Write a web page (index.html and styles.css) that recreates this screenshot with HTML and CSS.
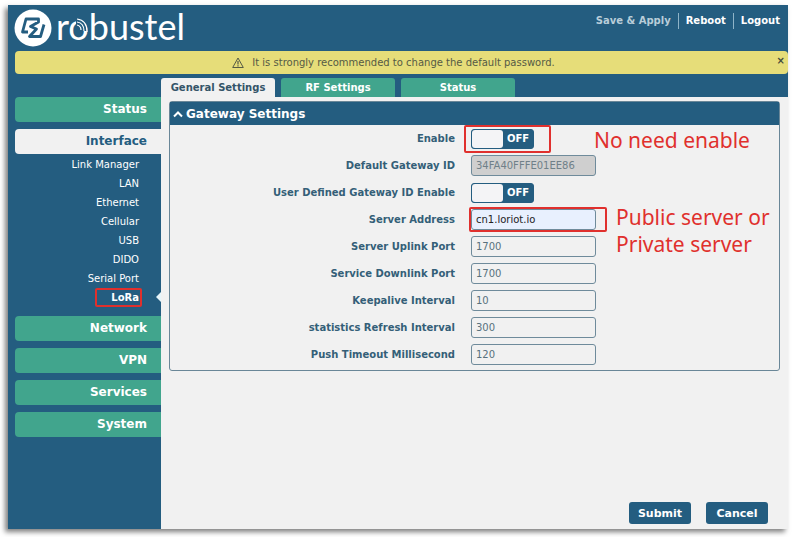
FILE: index.html
```html
<!DOCTYPE html>
<html lang="en">
<head>
<meta charset="utf-8">
<title>robustel - LoRa</title>
<link rel="stylesheet" href="styles.css">
</head>
<body>
<div class="app">
  <header class="header">
    <a class="logo" href="#">
      <svg class="logo-mark" viewBox="0 0 38 38" aria-hidden="true">
        <circle cx="19" cy="19" r="18.5" fill="#fff"/>
        <g fill="none" stroke="#245d80" stroke-width="2.8" stroke-linejoin="round">
          <path d="M14 23H8.500L12 10H24.500V13L16.500 17.500 22.500 20 15.500 27.500H26.500L30 15.500"/>
        </g>
      </svg>
      <span class="logo-text">robustel</span>
      <svg class="logo-waves" viewBox="0 0 12 16" aria-hidden="true">
        <path d="M0 2H6Q11 5 11 13H4L0 9Z" fill="#245d80"/>
        <g fill="none" stroke="#fff" stroke-width="1.200">
          <path d="M1 1Q11 2 11 14"/>
          <path d="M1 4Q8 5 8 13"/>
          <path d="M1 7Q5 8 5 12"/>
        </g>
      </svg>
    </a>
    <nav class="actions" aria-label="Session">
      <a class="dim" href="#">Save &amp; Apply</a>
      <a href="#">Reboot</a>
      <a href="#">Logout</a>
    </nav>
  </header>

  <div class="notice" role="alert">
    <svg class="warn" viewBox="0 0 12 12" aria-hidden="true">
      <path d="M6 1 11.300 10.500H.7Z" fill="none" stroke="#555a45" stroke-linejoin="round"/>
      <path d="M6 4V7.500M6 8.300V9.500" stroke="#555a45" stroke-width="1.200"/>
    </svg>
    <span>It is strongly recommended to change the default password.</span>
    <button class="close" type="button" aria-label="Close">×</button>
  </div>

  <div class="body">
    <nav class="sidebar" aria-label="Main">
      <a class="group" href="#">Status</a>
      <a class="group open" href="#">Interface</a>
      <div class="items">
        <a href="#">Link Manager</a>
        <a href="#">LAN</a>
        <a href="#">Ethernet</a>
        <a href="#">Cellular</a>
        <a href="#">USB</a>
        <a href="#">DIDO</a>
        <a href="#">Serial Port</a>
        <a class="current" href="#">LoRa<span class="mark mark-item"></span></a>
      </div>
      <a class="group" href="#">Network</a>
      <a class="group" href="#">VPN</a>
      <a class="group" href="#">Services</a>
      <a class="group" href="#">System</a>
    </nav>

    <main class="main">
      <nav class="tabs" aria-label="Sections">
        <a class="tab active" href="#">General Settings</a>
        <a class="tab" href="#">RF Settings</a>
        <a class="tab" href="#">Status</a>
      </nav>
      <form class="content">
        <section class="panel">
          <h2 class="panel-title">
            <svg class="chevron" viewBox="0 0 10 8" aria-hidden="true"><path d="M1 6.500 5 2.500 9 6.500" fill="none" stroke="#fff" stroke-width="2"/></svg>
            Gateway Settings
          </h2>
          <div class="rows">
            <div class="row">
              <label for="enable">Enable</label>
              <div class="field">
                <button class="switch" id="enable" type="button" role="switch" aria-checked="false"><span class="knob"></span><span class="state">OFF</span></button>
                <span class="mark mark-switch"></span>
                <span class="note note-enable">No need enable</span>
              </div>
            </div>
            <div class="row">
              <label for="gwid">Default Gateway ID</label>
              <div class="field"><input id="gwid" type="text" value="34FA40FFFE01EE86" disabled></div>
            </div>
            <div class="row">
              <label for="userid">User Defined Gateway ID Enable</label>
              <div class="field"><button class="switch" id="userid" type="button" role="switch" aria-checked="false"><span class="knob"></span><span class="state">OFF</span></button></div>
            </div>
            <div class="row">
              <label for="server">Server Address</label>
              <div class="field">
                <input class="filled" id="server" type="text" value="cn1.loriot.io">
                <span class="mark mark-input"></span>
                <span class="note note-server">Public server or<br>Private server</span>
              </div>
            </div>
            <div class="row">
              <label for="up">Server Uplink Port</label>
              <div class="field"><input id="up" type="text" value="1700"></div>
            </div>
            <div class="row">
              <label for="down">Service Downlink Port</label>
              <div class="field"><input id="down" type="text" value="1700"></div>
            </div>
            <div class="row">
              <label for="keep">Keepalive Interval</label>
              <div class="field"><input id="keep" type="text" value="10"></div>
            </div>
            <div class="row">
              <label for="stat">statistics Refresh Interval</label>
              <div class="field"><input id="stat" type="text" value="300"></div>
            </div>
            <div class="row">
              <label for="push">Push Timeout Millisecond</label>
              <div class="field"><input id="push" type="text" value="120"></div>
            </div>
          </div>
        </section>
        <div class="buttons">
          <button class="btn" type="submit">Submit</button>
          <button class="btn" type="button">Cancel</button>
        </div>
      </form>
    </main>
  </div>
</div>
</body>
</html>
```
FILE: styles.css
```css
:root {
  --blue: #245d80;
  --green: #41a58d;
  --grey: #f1f1f1;
  --red: #e0302d;
}

* {
  box-sizing: border-box;
}

body {
  margin: 0;
  padding: 5px 8px 8px;
  background: #fff;
  font-family: Verdana, "DejaVu Sans", sans-serif;
  font-size: 10px;
}

a {
  color: #fff;
  text-decoration: none;
}

button,
input {
  font: inherit;
}

.app {
  display: flex;
  flex-direction: column;
  min-height: calc(100vh - 13px);
  background: var(--blue);
  box-shadow: -3px 3px 5px rgba(0, 0, 0, 0.5);
}

.header {
  display: flex;
  justify-content: space-between;
  height: 46px;
  padding: 0 8px 0 6px;
}

.logo {
  position: relative;
  display: flex;
  align-items: center;
  gap: 4px;
}

.logo-mark {
  width: 38px;
  height: 38px;
}

.logo-text {
  padding-bottom: 4px;
  font-family: Lato, sans-serif;
  font-size: 36px;
  line-height: 38px;
}

.logo-waves {
  position: absolute;
  left: 62px;
  top: 13px;
  width: 12px;
  height: 16px;
}

.actions {
  display: flex;
  align-items: center;
  height: 16px;
  margin-top: 8px;
  font-weight: bold;
}

.actions a {
  line-height: 16px;
}

.actions a + a {
  margin-left: 7px;
  padding-left: 7px;
  border-left: 1px solid #8fb4c8;
}

.actions .dim {
  color: #b9cdd9;
}

.notice {
  position: relative;
  display: flex;
  align-items: center;
  justify-content: center;
  gap: 8px;
  height: 23px;
  margin-left: 7px;
  padding-right: 16px;
  border-radius: 4px;
  background: #e6dd79;
  color: #555a45;
}

.warn {
  width: 12px;
  height: 12px;
}

.close {
  position: absolute;
  right: 3px;
  top: 4px;
  padding: 0;
  border: 0;
  background: none;
  color: #444a3a;
  font-weight: bold;
  line-height: 12px;
}

.body {
  display: flex;
  flex: 1;
}

.sidebar {
  display: flex;
  flex-direction: column;
  flex: 0 0 153px;
  padding: 23px 0 0 7px;
}

.group {
  height: 25px;
  margin-bottom: 7px;
  padding-right: 14px;
  border-radius: 4px 0 0 4px;
  background: var(--green);
  font-size: 12px;
  font-weight: bold;
  line-height: 25px;
  text-align: right;
}

.group.open {
  margin-bottom: 0;
  background: var(--grey);
  color: var(--blue);
}

.items {
  padding: 1px 0 9px;
}

.items a {
  position: relative;
  display: block;
  padding-right: 22px;
  line-height: 19px;
  text-align: right;
}

.items .current {
  font-weight: bold;
}

.current::after {
  content: "";
  position: absolute;
  right: 0;
  top: 4px;
  border: 5px solid transparent;
  border-left-width: 0;
  border-right-color: #e6f5fa;
}

.mark {
  position: absolute;
  border: 2px solid var(--red);
  border-radius: 2px;
}

.mark-item {
  right: 19px;
  top: 0;
  width: 47px;
  height: 19px;
}

.main {
  display: flex;
  flex-direction: column;
  flex: 1;
}

.tabs {
  display: flex;
  gap: 6px;
  padding-top: 4px;
}

.tab {
  width: 114px;
  height: 19px;
  border-radius: 3px 3px 0 0;
  background: var(--green);
  font-weight: bold;
  line-height: 19px;
  text-align: center;
}

.tab.active {
  background: var(--grey);
  color: #345468;
}

.content {
  display: flex;
  flex-direction: column;
  justify-content: space-between;
  flex: 1;
  padding: 4px 8px 5px;
  background: var(--grey);
}

.panel {
  border: 1px solid #6a8798;
  border-radius: 3px;
}

.panel-title {
  display: flex;
  align-items: center;
  gap: 3px;
  height: 23px;
  margin: 0;
  padding-left: 3px;
  background: var(--blue);
  color: #fff;
  font-size: 12px;
}

.chevron {
  width: 10px;
  height: 8px;
}

.rows {
  padding-bottom: 2px;
}

.row {
  display: grid;
  grid-template-columns: 285px 1fr;
  column-gap: 16px;
  align-items: center;
  height: 27px;
}

.row label {
  color: #345f78;
  font-weight: bold;
  text-align: right;
}

.field {
  position: relative;
  display: flex;
}

.field input {
  width: 125px;
  height: 21px;
  padding: 0 4px;
  border: 1px solid #6f8b9b;
  border-radius: 3px;
  background: var(--grey);
  color: #58717e;
}

.field input:disabled {
  background: #cfcfcf;
  color: #6f8089;
}

.field .filled {
  background: #e8f0fe;
  color: #222;
}

.switch {
  display: flex;
  width: 63px;
  height: 20px;
  padding: 0;
  border: 1px solid var(--blue);
  border-radius: 3px;
  background: var(--blue);
  color: #fff;
  font-weight: bold;
  line-height: 18px;
}

.knob {
  width: 31px;
  height: 18px;
  border-radius: 3px;
  background: #f4f4f6;
}

.state {
  flex: 1;
  text-align: center;
}

.mark-switch {
  left: -7px;
  top: -4px;
  width: 87px;
  height: 28px;
}

.mark-input {
  left: -2px;
  top: -2px;
  width: 138px;
  height: 25px;
}

.note {
  position: absolute;
  color: var(--red);
  font-family: "Noto Sans", sans-serif;
  font-size: 21px;
  line-height: 27px;
  white-space: nowrap;
}

.note-enable {
  left: 123px;
  top: -2px;
}

.note-server {
  left: 145px;
  top: -5px;
}

.buttons {
  display: flex;
  justify-content: flex-end;
  gap: 15px;
  padding-right: 12px;
}

.btn {
  width: 62px;
  height: 22px;
  padding: 0;
  border: 0;
  border-radius: 3px;
  background: var(--blue);
  color: #fff;
  font-size: 11px;
  font-weight: bold;
}
```
